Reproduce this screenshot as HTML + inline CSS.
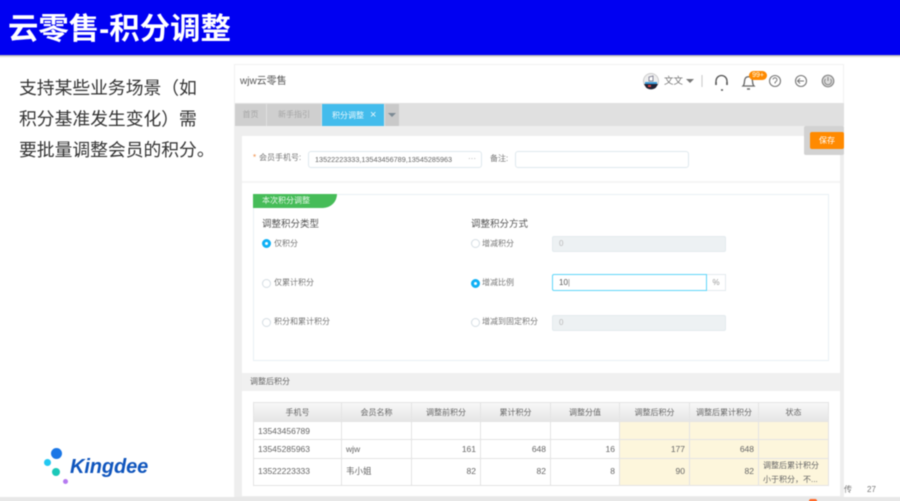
<!DOCTYPE html>
<html lang="zh"><head><meta charset="utf-8"><title>云零售-积分调整</title>
<style>
html,body{margin:0;padding:0;background:#fff;width:900px;height:501px;overflow:hidden}
#s{position:relative;width:900px;height:501px;background:#fff;font-family:"Liberation Sans","Noto Sans CJK SC",sans-serif;filter:blur(.45px)}
#s div,#s span.a{position:absolute;box-sizing:border-box;white-space:nowrap}
.t{font-size:8px;color:#777;line-height:12px}
.r{width:9px;height:9px;border-radius:50%;border:1px solid #d5dde3;background:#fff}
.r.on{border:3px solid #0fb0f5;background:#fff}
.inp{background:#edf1f3;border:1px solid #e3eaee;border-radius:2px;height:16px;font-size:8px;color:#bbb;line-height:14px;padding-left:6px}
.c{border-right:1px solid #e4e4e4;border-bottom:1px solid #e4e4e4;font-size:8.5px;color:#666;line-height:18px;padding:0 4px}
.h{background:linear-gradient(#f8f8f8,#e6e6e6);text-align:center;font-size:8px;line-height:19px}
.y{background:#fdf6dc}
.n{text-align:right}
</style></head><body><div id="s">
<div style="left:-5px;top:-5px;width:910px;height:60px;background:#0000f2;box-shadow:0 1px 2px #999"></div>
<div style="left:8px;top:10px;font-size:30.4px;font-weight:bold;color:#fff;line-height:38px">云零售-积分调整</div>
<div style="left:19px;top:73px;font-size:17.8px;line-height:31px;color:#333">支持某些业务场景（如<br>积分基准发生变化）需<br>要批量调整会员的积分。</div>

<!-- logo -->
<div style="left:50.500px;top:447.500px;width:11px;height:11px;border-radius:50%;background:#1a76e6"></div>
<div style="left:43.500px;top:458.500px;width:7px;height:7px;border-radius:50%;background:#22c8f2"></div>
<div style="left:52px;top:468px;width:8px;height:8px;border-radius:50%;background:#1bc8b8"></div>
<div style="left:62.500px;top:478.500px;width:5px;height:5px;border-radius:50%;background:#b57af0"></div>
<div style="left:70px;top:455px;font-size:20px;font-weight:bold;font-style:italic;color:#0f55bd;line-height:24px;letter-spacing:-.1px">Kingdee</div>

<!-- app -->
<div style="left:234px;top:64px;width:610px;height:433px;background:#fff;border:1px solid #f1f1f1"></div>
<div style="left:240px;top:75px;font-size:10px;color:#555;line-height:14px">wjw云零售</div>
<div style="left:235px;top:103px;width:609px;height:23px;background:#e0e0e0"></div>
<div style="left:235px;top:104px;width:31px;height:22px;background:#cfcfcf;color:#a5a5a5;font-size:8px;line-height:22px;text-align:center">首页</div>
<div style="left:267px;top:104px;width:54px;height:22px;background:#cfcfcf;color:#a5a5a5;font-size:8px;line-height:22px;text-align:center">新手指引</div>
<div style="left:322px;top:104px;width:62px;height:22px;background:#43bcec;color:#e8f7fd;font-size:8px;line-height:22px;padding-left:10px">积分调整<span style="font-size:11px;margin-left:6px">×</span></div>
<div style="left:385px;top:104px;width:14px;height:22px;background:#c9c9c9"></div>
<div style="left:388px;top:113px;width:0;height:0;border:4px solid transparent;border-top:4px solid #7c8a94;border-bottom:0"></div>
<div style="left:235px;top:126px;width:609px;height:371px;background:#eeeeee"></div>
<div style="left:242px;top:136px;width:598px;height:237px;background:#fff"></div>
<div style="left:242px;top:373px;width:598px;height:21px;background:#f0f0f0"></div>
<div style="left:242px;top:391px;width:598px;height:105px;background:#fff"></div>
<div style="left:242px;top:181px;width:598px;height:2px;background:#f5f5f5"></div>

<!-- header icons -->
<svg style="position:absolute;left:630px;top:65px" width="210" height="40" viewBox="0 0 210 40" fill="none">
<circle cx="21" cy="16" r="7.500" fill="#eee" stroke="#ccc"/><path d="M14 19h14l-2 3.500a7.500 7.500 0 0 1-10 0z" fill="#223"/><rect x="15" y="17" width="12" height="2" fill="#3a9ad8"/><rect x="18" y="20" width="3" height="2" fill="#d44"/><path d="M19 16v-4l4-1v5z" fill="#fff" stroke="#889"/>
<path d="M72 10v12" stroke="#c8c8c8"/><path d="M86 20v-4a5.500 5.500 0 0 1 11 0v4" stroke="#555" stroke-width="1.300"/><path d="M86 17v3M97 17v3M91 25h2" stroke="#555" stroke-width="1.500"/>
<path d="M113 21c2-2 1-5 2-7 1-3 6-3 7 0 1 2 0 5 2 7z" stroke="#666" stroke-width="1.300"/><path d="M117 24h3" stroke="#666" stroke-width="1.500"/>
<circle cx="145" cy="16" r="5.500" stroke="#777" stroke-width="1.100"/><path d="M143 14.500a2 2 0 1 1 3 2l-1 1v1" stroke="#777"/>
<circle cx="171" cy="16" r="5.500" stroke="#777" stroke-width="1.100"/><path d="M174 16h-6M170 13.500l-2.500 2.500 2.500 2.500" stroke="#777"/>
<circle cx="198" cy="16" r="5.800" fill="#ddd" stroke="#888" stroke-width="1.200"/><path d="M195.500 14a3.400 3.400 0 1 0 5 0M198 12v4" stroke="#888"/>
</svg>
<div style="left:664px;top:75px;font-size:9.500px;color:#777;line-height:13px">文文</div>
<div style="left:686px;top:79px;width:0;height:0;border:4px solid transparent;border-top:4px solid #777;border-bottom:0"></div>
<div style="left:749px;top:71px;width:18px;height:9px;border-radius:5px;background:#ff8a00;color:#ffe;font-size:7px;line-height:9px;text-align:center">99+</div>

<!-- save -->
<div style="left:804px;top:126px;width:40px;height:29px;background:#d2d2d2;border-radius:2px"></div>
<div style="left:810px;top:132px;width:34px;height:17px;background:#ff8a00;border-radius:2px;color:#fff;font-size:8px;line-height:17px;text-align:center">保存</div>

<!-- form -->
<div class="t" style="left:253px;top:152px;color:#f08a40">*</div>
<div class="t" style="left:259px;top:152px">会员手机号:</div>
<div style="left:308px;top:151px;width:174px;height:17px;border:1px solid #dfe8ee;border-radius:3px;font-size:7.250px;color:#666;line-height:16px;padding-left:6px">13522223333,13543456789,13545285963<span class="a" style="left:159px;top:-1px;color:#aaa;font-size:8px">···</span></div>
<div class="t" style="left:490px;top:153px">备注:</div>
<div style="left:515px;top:151px;width:174px;height:17px;border:1px solid #dfe8ee;border-radius:3px"></div>

<div style="left:253px;top:194px;width:576px;height:167px;border:1px solid #e9f0f4"></div>
<div style="left:253px;top:194px;width:84px;height:14px;background:#46bc58;border-radius:0 0 14px 0;color:#e6f7e8;font-size:8px;line-height:14px;padding-left:9px">本次积分调整</div>
<div style="left:262px;top:218px;font-size:9.500px;color:#555;line-height:14px">调整积分类型</div>
<div style="left:471px;top:218px;font-size:9.500px;color:#555;line-height:14px">调整积分方式</div>

<div class="r on" style="left:262px;top:239px"></div><div class="t" style="left:274px;top:238px">仅积分</div>
<div class="r" style="left:262px;top:279px"></div><div class="t" style="left:274px;top:277px">仅累计积分</div>
<div class="r" style="left:262px;top:318px"></div><div class="t" style="left:274px;top:316px">积分和累计积分</div>
<div class="r" style="left:471px;top:239px"></div><div class="t" style="left:482px;top:238px">增减积分</div>
<div class="r on" style="left:471px;top:279px"></div><div class="t" style="left:482px;top:277px">增减比例</div>
<div class="r" style="left:471px;top:318px"></div><div class="t" style="left:482px;top:316px">增减到固定积分</div>

<div class="inp" style="left:552px;top:236px;width:174px">0</div>
<div style="left:552px;top:274px;width:155px;height:17px;border:1px solid #5fd6f8;border-radius:2px 0 0 2px;font-size:8px;color:#555;line-height:16px;padding-left:6px">10<span style="color:#888">|</span></div>
<div style="left:707px;top:274px;width:19px;height:17px;border:1px solid #e3eaee;border-left:0;font-size:8px;color:#999;line-height:16px;text-align:center">%</div>
<div class="inp" style="left:552px;top:315px;width:174px">0</div>

<div style="left:250px;top:376px;font-size:8px;color:#666;line-height:12px">调整后积分</div>

<!-- table -->
<div style="left:253px;top:402px;width:576px;height:84px;border-left:1px solid #e4e4e4;border-top:1px solid #e4e4e4"></div>
<div class="c h" style="left:254px;top:403px;width:88px;height:19px">手机号</div>
<div class="c h" style="left:342px;top:403px;width:70px;height:19px">会员名称</div>
<div class="c h" style="left:412px;top:403px;width:69px;height:19px">调整前积分</div>
<div class="c h" style="left:481px;top:403px;width:70px;height:19px">累计积分</div>
<div class="c h" style="left:551px;top:403px;width:69px;height:19px">调整分值</div>
<div class="c h" style="left:620px;top:403px;width:70px;height:19px">调整后积分</div>
<div class="c h" style="left:690px;top:403px;width:69px;height:19px">调整后累计积分</div>
<div class="c h" style="left:759px;top:403px;width:70px;height:19px">状态</div>

<div class="c" style="left:254px;top:422px;width:88px;height:18px">13543456789</div>
<div class="c" style="left:342px;top:422px;width:70px;height:18px"></div>
<div class="c" style="left:412px;top:422px;width:69px;height:18px"></div>
<div class="c" style="left:481px;top:422px;width:70px;height:18px"></div>
<div class="c" style="left:551px;top:422px;width:69px;height:18px"></div>
<div class="c y" style="left:620px;top:422px;width:70px;height:18px"></div>
<div class="c y" style="left:690px;top:422px;width:69px;height:18px"></div>
<div class="c y" style="left:759px;top:422px;width:70px;height:18px"></div>

<div class="c" style="left:254px;top:440px;width:88px;height:19px">13545285963</div>
<div class="c" style="left:342px;top:440px;width:70px;height:19px">wjw</div>
<div class="c n" style="left:412px;top:440px;width:69px;height:19px">161</div>
<div class="c n" style="left:481px;top:440px;width:70px;height:19px">648</div>
<div class="c n" style="left:551px;top:440px;width:69px;height:19px">16</div>
<div class="c n y" style="left:620px;top:440px;width:70px;height:19px">177</div>
<div class="c n y" style="left:690px;top:440px;width:69px;height:19px">648</div>
<div class="c y" style="left:759px;top:440px;width:70px;height:19px"></div>

<div class="c" style="left:254px;top:459px;width:88px;height:27px;line-height:25px">13522223333</div>
<div class="c" style="left:342px;top:459px;width:70px;height:27px;line-height:25px">韦小姐</div>
<div class="c n" style="left:412px;top:459px;width:69px;height:27px;line-height:25px">82</div>
<div class="c n" style="left:481px;top:459px;width:70px;height:27px;line-height:25px">82</div>
<div class="c n" style="left:551px;top:459px;width:69px;height:27px;line-height:25px">8</div>
<div class="c n y" style="left:620px;top:459px;width:70px;height:27px;line-height:25px">90</div>
<div class="c n y" style="left:690px;top:459px;width:69px;height:27px;line-height:25px">82</div>
<div class="c y" style="left:759px;top:459px;width:70px;height:27px;font-size:8px;line-height:13.500px">调整后累计积分<br>小于积分，不...</div>

<!-- footer -->
<div style="left:844px;top:484px;font-size:8px;color:#777;line-height:12px">传</div>
<div style="left:867px;top:484px;font-size:8px;color:#777;line-height:12px">27</div>
<div style="left:-5px;top:497px;width:910px;height:10px;background:#e8e8e8"></div>
<div style="left:809px;top:499px;width:8px;height:4px;background:#ff6a2a;border-radius:2px 2px 0 0"></div>
</div></body></html>
